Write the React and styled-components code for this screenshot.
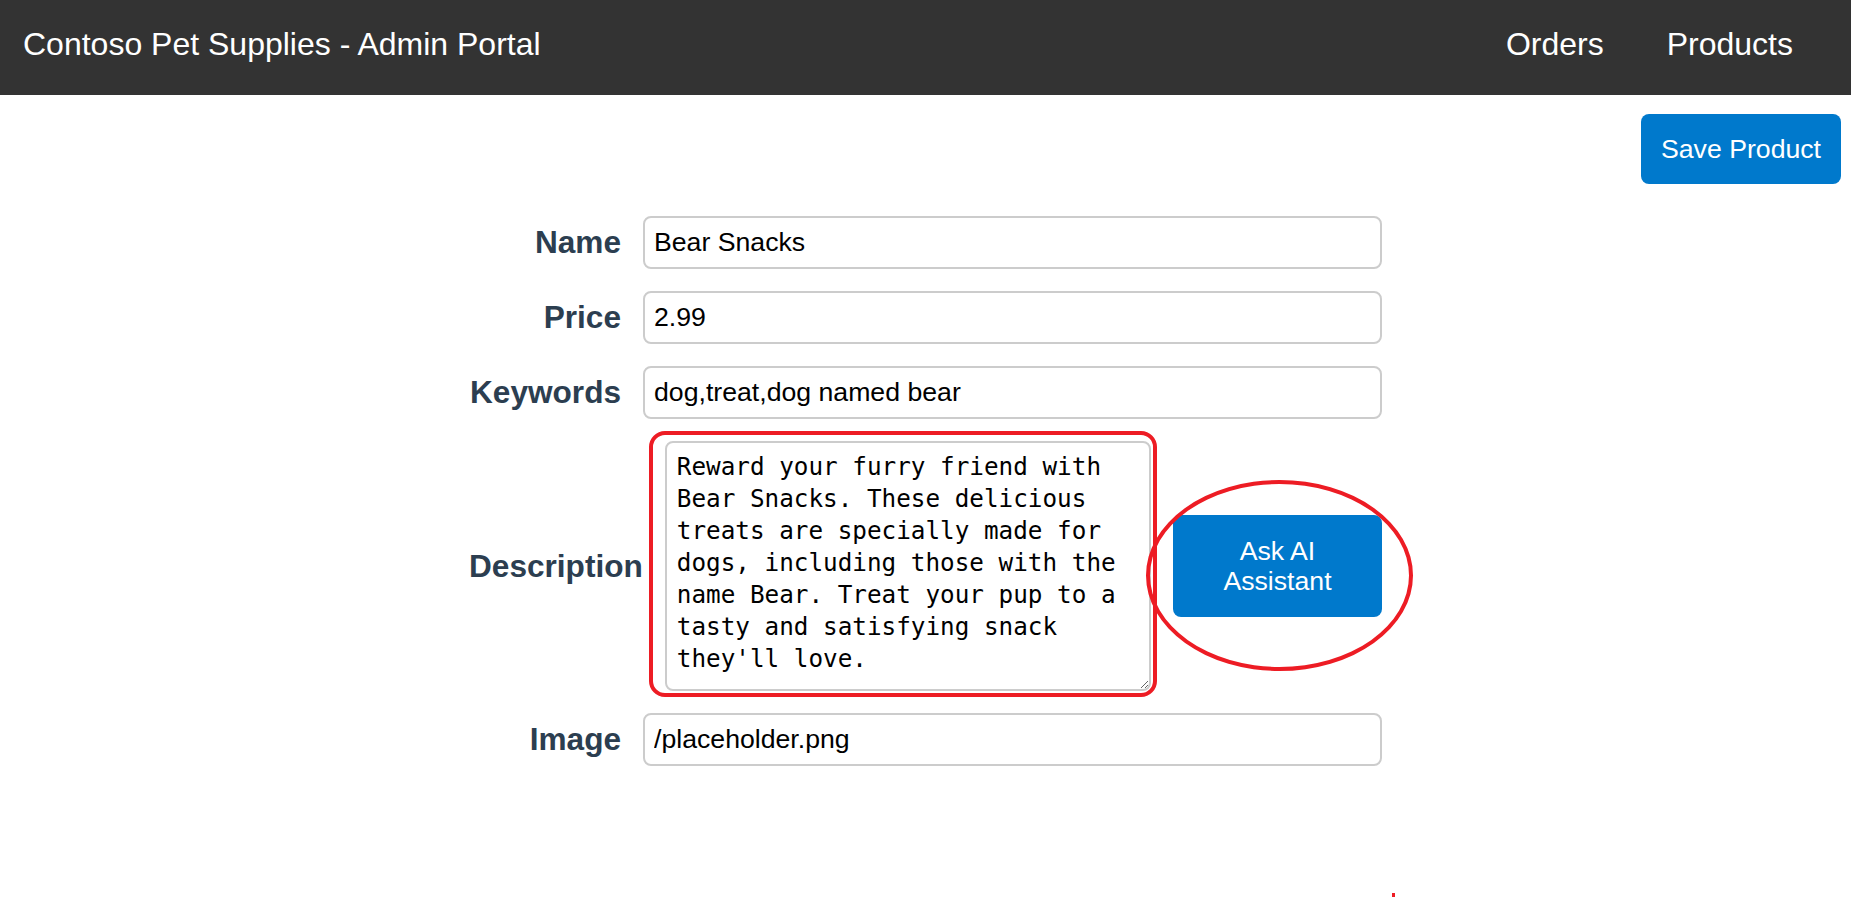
import React, { useState } from 'react';
import styled, { createGlobalStyle } from 'styled-components';

const GlobalStyle = createGlobalStyle`
  html, body {
    margin: 0;
    padding: 0;
    background: #ffffff;
  }

  body {
    font-family: 'Liberation Sans', Arial, sans-serif;
  }
`;

const Page = styled.div`
  position: relative;
  min-height: 100vh;
  color: #2c3e50;
`;

const Header = styled.header`
  display: flex;
  align-items: center;
  justify-content: space-between;
  box-sizing: border-box;
  height: 95px;
  padding: 0 58px 7px 23px;
  background-color: #333333;
  color: #ffffff;
`;

const Title = styled.div`
  font-size: 32px;
`;

const Nav = styled.nav`
  display: flex;
  gap: 63px;
`;

const NavLink = styled.a`
  font-size: 32px;
  color: #ffffff;
  text-decoration: none;
  cursor: pointer;
`;

const Toolbar = styled.div`
  display: flex;
  justify-content: flex-end;
  padding: 19px 10px 0 0;
`;

const Button = styled.button`
  box-sizing: border-box;
  width: ${({ wide }) => (wide ? '209px' : '200px')};
  height: ${({ wide }) => (wide ? '102px' : '70px')};
  padding: ${({ wide }) => (wide ? '0 20px' : '0')};

  font-family: 'Liberation Sans', Arial, sans-serif;
  font-size: 26.67px;
  line-height: 30px;
  color: #ffffff;
  white-space: ${({ wide }) => (wide ? 'normal' : 'nowrap')};

  background-color: #0079cc;
  border: none;
  border-radius: 8px;
  cursor: pointer;
`;

const Form = styled.form`
  display: flex;
  flex-direction: column;
  gap: 22px;
  width: 913px;
  margin: 32px auto 0;
`;

const Row = styled.div`
  display: flex;
  align-items: center;
  gap: 22px;
`;

const Label = styled.label`
  flex-shrink: 0;
  min-width: 152px;
  text-align: right;
  font-size: 31.6px;
  font-weight: bold;
  color: #2c3e50;
`;

const Input = styled.input`
  flex: 1;
  box-sizing: border-box;
  height: 53px;
  padding: 0 9px;

  font-family: 'Liberation Sans', Arial, sans-serif;
  font-size: 26.67px;
  color: #000000;

  border: 2px solid #cccccc;
  border-radius: 8px;
  outline: none;
`;

const TextareaFrame = styled.div`
  position: relative;
  flex: 1;
  display: flex;
`;

const Textarea = styled.textarea`
  flex: 1;
  box-sizing: border-box;
  height: 250px;
  padding: 8px 10px;

  font-family: 'DejaVu Sans Mono', 'Liberation Mono', monospace;
  font-size: 24.3px;
  line-height: 32px;
  color: #000000;

  border: 2px solid #cccccc;
  border-radius: 8px;
  outline: none;
  overflow: hidden;
`;

const MarkBox = styled.span`
  position: absolute;
  top: -10px;
  right: -6px;
  bottom: -6px;
  left: -16px;
  border: 4px solid #ed1c24;
  border-radius: 16px;
  pointer-events: none;
`;

const ButtonFrame = styled.div`
  position: relative;
  flex-shrink: 0;
  display: flex;
`;

const MarkEllipse = styled.span`
  position: absolute;
  top: -35px;
  right: -31px;
  bottom: -54px;
  left: -27px;
  border: 4px solid #ed1c24;
  border-radius: 50%;
  pointer-events: none;
`;

const StrayDot = styled.span`
  position: absolute;
  top: 893px;
  left: 1392px;
  width: 3px;
  height: 4px;
  background-color: #ed1c24;
`;

const initialProduct = {
  name: 'Bear Snacks',
  price: '2.99',
  keywords: 'dog,treat,dog named bear',
  description:
    "Reward your furry friend with Bear Snacks. These delicious treats are specially made for dogs, including those with the name Bear. Treat your pup to a tasty and satisfying snack they'll love.",
  image: '/placeholder.png',
};

const App = () => {
  const [product, setProduct] = useState(initialProduct);

  const update = (field) => (e) => setProduct({ ...product, [field]: e.target.value });

  return (
    <Page>
      <GlobalStyle />
      <Header>
        <Title>Contoso Pet Supplies - Admin Portal</Title>
        <Nav>
          <NavLink>Orders</NavLink>
          <NavLink>Products</NavLink>
        </Nav>
      </Header>

      <Toolbar>
        <Button type="button">Save Product</Button>
      </Toolbar>

      <Form onSubmit={(e) => e.preventDefault()}>
        <Row>
          <Label htmlFor="name">Name</Label>
          <Input id="name" value={product.name} onChange={update('name')} />
        </Row>
        <Row>
          <Label htmlFor="price">Price</Label>
          <Input id="price" value={product.price} onChange={update('price')} />
        </Row>
        <Row>
          <Label htmlFor="keywords">Keywords</Label>
          <Input id="keywords" value={product.keywords} onChange={update('keywords')} />
        </Row>
        <Row>
          <Label htmlFor="description">Description</Label>
          <TextareaFrame>
            <Textarea
              id="description"
              value={product.description}
              onChange={update('description')}
            />
            <MarkBox />
          </TextareaFrame>
          <ButtonFrame>
            <Button type="button" wide>
              Ask AI Assistant
            </Button>
            <MarkEllipse />
          </ButtonFrame>
        </Row>
        <Row>
          <Label htmlFor="image">Image</Label>
          <Input id="image" value={product.image} onChange={update('image')} />
        </Row>
      </Form>

      <StrayDot />
    </Page>
  );
};

export default App;
